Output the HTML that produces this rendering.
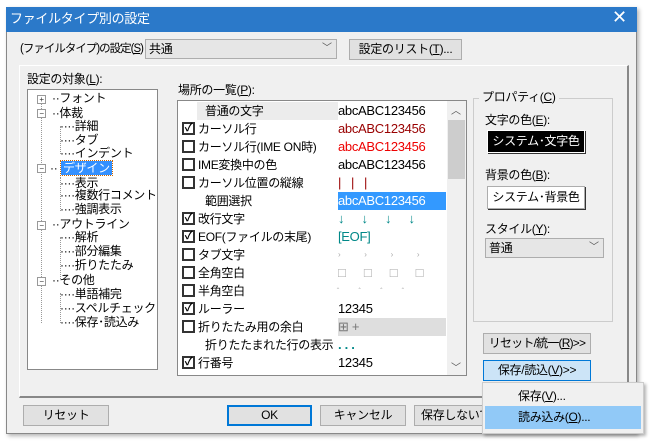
<!DOCTYPE html><html><head><meta charset="utf-8"><style>
*{box-sizing:border-box;margin:0;padding:0}
body{width:654px;height:443px;background:#fff;position:relative;overflow:hidden;font-family:"Liberation Sans","Noto Sans CJK JP",sans-serif;font-size:12px;color:#000;letter-spacing:-0.3px}
.a{position:absolute;white-space:nowrap;line-height:18px}
.btn{position:absolute;background:#e1e1e1;border:1px solid #adadad;text-align:center;line-height:18px;white-space:nowrap;overflow:hidden}
.cb{position:absolute;left:4px;width:13px;height:13px;border:2px solid #333;background:#fff;top:2px;font-size:11px;line-height:9px;text-align:center;font-weight:bold}
.row{position:absolute;left:0;width:270px;height:18px}
.row .t{position:absolute;left:20px;top:0;line-height:18px;white-space:nowrap}
.row .v{position:absolute;left:160px;top:0;line-height:18px;white-space:nowrap;font-family:"Liberation Sans Narrow","Liberation Sans",sans-serif;font-size:13px}
.tree div{position:absolute;white-space:nowrap;line-height:14px}
.pm{position:absolute;width:9px;height:9px;border:1px solid #999;background:#fff;font-size:8px;line-height:7px;text-align:center;color:#333}
</style></head><body>
<div style="position:absolute;left:6px;top:7px;width:631px;height:427px;background:#f0f0f0;border:1px solid #888;box-shadow:2px 2px 4px rgba(0,0,0,.3)"></div>
<div style="position:absolute;left:6px;top:7px;width:631px;height:25px;background:#2b79c9"></div>
<div class="a" style="left:10px;top:10px;color:#fff;font-size:13px">ファイルタイプ別の設定</div>
<div class="a" style="left:612px;top:8px;color:#fff;font-size:18px">✕</div>
<div class="a" style="left:20px;top:40px;letter-spacing:-1px;font-size:11.5px">(ファイルタイプ)の設定(<u>S</u>) :</div>
<div style="position:absolute;left:145px;top:39px;width:192px;height:20px;background:#e6e6e6;border:1px solid #adadad"></div>
<div class="a" style="left:149px;top:40px">共通</div>
<div class="a" style="left:322px;top:40px;color:#555;font-size:10px">﹀</div>
<div class="btn" style="left:349px;top:39px;width:113px;height:21px">設定のリスト(<u>T</u>)...</div>
<div style="position:absolute;left:19px;top:65px;width:610px;height:333px;border-top:1px solid #fff;border-left:1px solid #fff;border-right:2px solid #888;border-bottom:2px solid #888"></div>
<div class="a" style="left:27px;top:70px">設定の対象(<u>L</u>):</div>
<div class="tree" style="position:absolute;left:27px;top:89px;width:131px;height:281px;background:#fff;border:1px solid #888">
<div style="left:13px;top:8px;width:0;height:225px;border-left:1px dotted #999"></div>
<div style="left:32px;top:36px;width:0;height:28px;border-left:1px dotted #999"></div>
<div style="left:32px;top:87px;width:0;height:34px;border-left:1px dotted #999"></div>
<div style="left:32px;top:147px;width:0;height:42px;border-left:1px dotted #999"></div>
<div style="left:32px;top:203px;width:0;height:30px;border-left:1px dotted #999"></div>
<span class="pm" style="left:9px;top:5px">+</span><div style="left:24px;top:1px">··フォント</div>
<span class="pm" style="left:9px;top:19px">−</span><div style="left:24px;top:16px">··体裁</div>
<div style="left:32px;top:29px">····詳細</div>
<div style="left:32px;top:43px">····タブ</div>
<div style="left:32px;top:56px">····インデント</div>
<span class="pm" style="left:9px;top:74px">−</span><div style="left:22px;top:71px">··</div><div style="left:33px;top:71px;background:#3390ff;color:#fff;outline:1px dotted #c60;padding:0 2px">デザイン</div>
<div style="left:32px;top:86px">····表示</div>
<div style="left:32px;top:98px">····複数行コメント</div>
<div style="left:32px;top:112px">····強調表示</div>
<span class="pm" style="left:9px;top:131px">−</span><div style="left:24px;top:127px">··アウトライン</div>
<div style="left:32px;top:140px">····解析</div>
<div style="left:32px;top:154px">····部分編集</div>
<div style="left:32px;top:168px">····折りたたみ</div>
<span class="pm" style="left:9px;top:187px">−</span><div style="left:24px;top:183px">··その他</div>
<div style="left:32px;top:197px">····単語補完</div>
<div style="left:32px;top:211px">····スペルチェック</div>
<div style="left:32px;top:225px">····保存･読込み</div>
</div>
<div class="a" style="left:178px;top:81px">場所の一覧(<u>P</u>):</div>
<div style="position:absolute;left:177px;top:100px;width:290px;height:276px;background:#fff;border:1px solid #888;overflow:hidden">
<div style="position:absolute;left:269px;top:0;width:19px;height:274px;background:#f0f0f0"></div>
<div style="position:absolute;left:270px;top:19px;width:17px;height:59px;background:#cdcdcd"></div>
<div style="position:absolute;left:273px;top:1px;font-size:10px;color:#555">︿</div>
<div style="position:absolute;left:273px;top:258px;font-size:10px;color:#555">﹀</div>
<div style="position:absolute;top:1px;left:0;width:269px">
<div class="row" style="top:0"><div style="position:absolute;left:19px;width:141px;height:18px;background:#ececec"></div><span class="t" style="left:27px">普通の文字</span><span class="v">abcABC123456</span></div>
<div class="row" style="top:18px"><span class="cb">✓</span><span class="t">カーソル行</span><span class="v" style="color:#900">abcABC123456</span></div>
<div class="row" style="top:36px"><span class="cb"></span><span class="t">カーソル行(IME ON時)</span><span class="v" style="color:#e00">abcABC123456</span></div>
<div class="row" style="top:54px"><span class="cb"></span><span class="t">IME変換中の色</span><span class="v">abcABC123456</span></div>
<div class="row" style="top:72px"><span class="cb"></span><span class="t">カーソル位置の縦線</span><span class="v" style="color:#900">|&nbsp;&nbsp;&nbsp;|&nbsp;&nbsp;&nbsp;|</span></div>
<div class="row" style="top:90px"><span class="t" style="left:27px">範囲選択</span><span class="v" style="background:#3399ff;color:#fff;width:108px">abcABC123456</span></div>
<div class="row" style="top:108px"><span class="cb">✓</span><span class="t">改行文字</span><span class="v" style="color:#088;word-spacing:14px">↓ ↓ ↓ ↓</span></div>
<div class="row" style="top:126px"><span class="cb">✓</span><span class="t">EOF(ファイルの末尾)</span><span class="v" style="color:#088">[EOF]</span></div>
<div class="row" style="top:144px"><span class="cb"></span><span class="t">タブ文字</span><span class="v" style="color:#aaa;font-size:8px;word-spacing:22px">› › › ›</span></div>
<div class="row" style="top:162px"><span class="cb"></span><span class="t">全角空白</span><span class="v" style="color:#aaa;word-spacing:15px">□ □ □ □</span></div>
<div class="row" style="top:180px"><span class="cb"></span><span class="t">半角空白</span><span class="v" style="color:#aaa;font-size:8px;word-spacing:20px">ꜙ ꜙ ꜙ ꜙ</span></div>
<div class="row" style="top:198px"><span class="cb">✓</span><span class="t">ルーラー</span><span class="v">12345</span></div>
<div class="row" style="top:216px"><span class="cb"></span><span class="t">折りたたみ用の余白</span><span class="v" style="background:#dedede;width:108px;color:#777">⊞ +</span></div>
<div class="row" style="top:234px"><span class="t" style="left:27px">折りたたまれた行の表示</span><span class="v" style="color:#088;font-weight:bold">. . .</span></div>
<div class="row" style="top:252px"><span class="cb">✓</span><span class="t">行番号</span><span class="v">12345</span></div>
</div></div>
<div style="position:absolute;left:473px;top:98px;width:140px;height:224px;border:1px solid #ccc"></div>
<div class="a" style="left:479px;top:88px;background:#f0f0f0;padding:0 3px">プロパティ(<u>C</u>)</div>
<div class="a" style="left:485px;top:111px">文字の色(<u>E</u>):</div>
<div class="btn" style="left:487px;top:130px;width:98px;height:23px;background:#000;color:#fff;border:1px solid #fff;box-shadow:1px 1px 0 #333;line-height:20px">システム･文字色</div>
<div class="a" style="left:485px;top:166px">背景の色(<u>B</u>):</div>
<div class="btn" style="left:487px;top:186px;width:98px;height:23px;background:#fff;box-shadow:1px 1px 0 #333;line-height:20px">システム･背景色</div>
<div class="a" style="left:485px;top:220px">スタイル(<u>Y</u>):</div>
<div style="position:absolute;left:485px;top:238px;width:119px;height:20px;background:#e6e6e6;border:1px solid #adadad"></div>
<div class="a" style="left:489px;top:239px">普通</div>
<div class="a" style="left:589px;top:239px;color:#555;font-size:10px">﹀</div>
<div class="btn" style="left:483px;top:333px;width:108px;height:21px;letter-spacing:-0.8px">リセット/統一(<u>R</u>)&gt;&gt;</div>
<div class="btn" style="left:483px;top:360px;width:108px;height:21px;background:#cce4f7;border-color:#0078d7">保存/読込(<u>V</u>)&gt;&gt;</div>
<div class="btn" style="left:23px;top:405px;width:86px;height:21px">リセット</div>
<div class="btn" style="left:227px;top:405px;width:85px;height:21px;border:2px solid #0078d7;line-height:17px">OK</div>
<div class="btn" style="left:320px;top:405px;width:86px;height:21px">キャンセル</div>
<div class="btn" style="left:414px;top:405px;width:86px;height:21px;text-align:left;padding-left:6px">保存しないで</div>
<div style="position:absolute;left:482px;top:382px;width:162px;height:52px;background:#f0f0f0;border:1px solid #ccc;box-shadow:2px 2px 3px rgba(0,0,0,.3)"></div>
<div class="a" style="left:518px;top:387px">保存(<u>V</u>)...</div>
<div style="position:absolute;left:485px;top:406px;width:156px;height:23px;background:#91c9f7"></div>
<div class="a" style="left:518px;top:408px">読み込み(<u>O</u>)...</div>
</body></html>
